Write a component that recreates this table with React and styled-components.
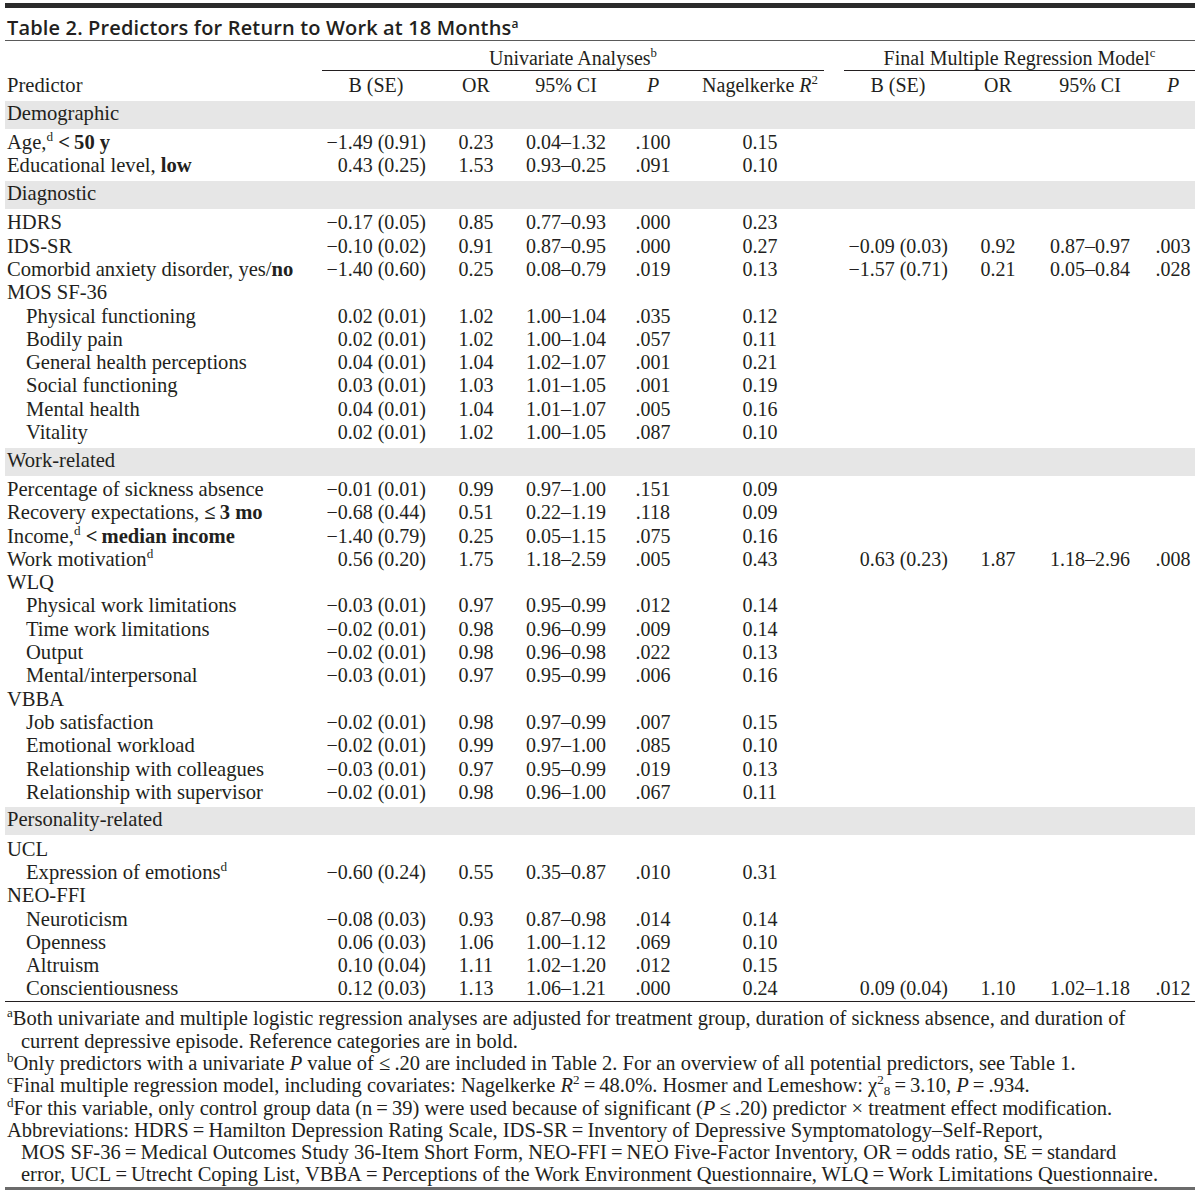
import React from 'react'
import styled, { createGlobalStyle } from 'styled-components'

const COLS = '317px 108px 92px 88px 86px 128px 20px 108px 92px 92px 59px'

const Global = createGlobalStyle`
  body {
    margin: 0;
    background: #fff;
    color: #231f20;
    font-family: "Liberation Serif", "Times New Roman", serif;
  }
`

const Page = styled.div`
  width: 1190px;
  padding: 0 5px;
  overflow: hidden;
`

const TopBar = styled.div`
  margin-top: 3px;
  height: 5px;
  background: #2b2b2b;
`

const Title = styled.h1`
  margin: 0;
  padding: 8px 0 0 2px;
  height: 24px;
  line-height: 24px;
  font-family: "Open Sans", "Liberation Sans", sans-serif;
  font-weight: 600;
  font-size: 20px;
  letter-spacing: 0.15px;
  color: #231f20;
  border-bottom: 1.5px solid #5a5a5a;
  white-space: nowrap;
`

const TitleSup = styled.sup`
  font-size: 12px;
  vertical-align: 7px;
  line-height: 0;
`

const Grid = styled.div`
  display: grid;
  grid-template-columns: ${COLS};
  font-size: 20px;
  line-height: 23.3px;
  white-space: nowrap;
`

const HeadTop = styled(Grid)`
  margin-top: 6px;
`

const HeadRow = styled(Grid)`
  margin-top: 3px;
`

const Group = styled.div`
  grid-column: ${({ $span }) => $span};
  text-align: center;
  border-bottom: 1px solid #231f20;
`

const Cell = styled.div`
  text-align: ${({ $align }) => $align || 'center'};
  padding-right: ${({ $pr }) => $pr || 0}px;
  padding-left: ${({ $pl }) => $pl || 0}px;
`

const Label = styled.div`
  padding-left: ${({ $indent }) => ($indent ? 21 : 2)}px;
  font-size: 20.6px;
`

const Section = styled.div`
  margin: 3.3px 0 2.3px;
  height: 28px;
  padding-left: 2px;
  line-height: 24px;
  font-size: 20.6px;
  background: #e6e6e6;
`

const Sup = styled.sup`
  font-size: 0.64em;
  vertical-align: 0.6em;
  line-height: 0;
`

const Sub = styled.sub`
  font-size: 0.64em;
  vertical-align: -0.2em;
  line-height: 0;
`

const I = styled.i`
  font-style: italic;
`

const B = styled.b`
  font-weight: 700;
`

const Rule = styled.div`
  margin-top: 0.6px;
  border-top: 1px solid #231f20;
`

const Notes = styled.div`
  padding-top: 5px;
  font-size: 20.5px;
  line-height: 22.3px;
`

const NoteLine = styled.div`
  white-space: nowrap;
  padding-left: ${({ $indent }) => ($indent ? 16 : 2)}px;
`

const BottomRule = styled.div`
  margin-top: 1.5px;
  border-top: 3px solid #6b6b6b;
`

const th = '\u2009'

const U_SPEC = [
  { $align: 'right', $pr: 4 },
  {},
  {},
  {},
  {},
]
const F_SPEC = [
  { $align: 'right', $pr: 4 },
  {},
  {},
  { $pl: 15 },
]

const rows = [
  { section: 'Demographic' },
  { label: <>Age,<Sup>d</Sup> <B>&lt;{th}50 y</B></>, u: ['−1.49 (0.91)', '0.23', '0.04–1.32', '.100', '0.15'] },
  { label: <>Educational level, <B>low</B></>, u: ['0.43 (0.25)', '1.53', '0.93–0.25', '.091', '0.10'] },
  { section: 'Diagnostic' },
  { label: 'HDRS', u: ['−0.17 (0.05)', '0.85', '0.77–0.93', '.000', '0.23'] },
  { label: 'IDS-SR', u: ['−0.10 (0.02)', '0.91', '0.87–0.95', '.000', '0.27'], f: ['−0.09 (0.03)', '0.92', '0.87–0.97', '.003'] },
  { label: <>Comorbid anxiety disorder, yes/<B>no</B></>, u: ['−1.40 (0.60)', '0.25', '0.08–0.79', '.019', '0.13'], f: ['−1.57 (0.71)', '0.21', '0.05–0.84', '.028'] },
  { label: 'MOS SF-36' },
  { label: 'Physical functioning', indent: true, u: ['0.02 (0.01)', '1.02', '1.00–1.04', '.035', '0.12'] },
  { label: 'Bodily pain', indent: true, u: ['0.02 (0.01)', '1.02', '1.00–1.04', '.057', '0.11'] },
  { label: 'General health perceptions', indent: true, u: ['0.04 (0.01)', '1.04', '1.02–1.07', '.001', '0.21'] },
  { label: 'Social functioning', indent: true, u: ['0.03 (0.01)', '1.03', '1.01–1.05', '.001', '0.19'] },
  { label: 'Mental health', indent: true, u: ['0.04 (0.01)', '1.04', '1.01–1.07', '.005', '0.16'] },
  { label: 'Vitality', indent: true, u: ['0.02 (0.01)', '1.02', '1.00–1.05', '.087', '0.10'] },
  { section: 'Work-related' },
  { label: 'Percentage of sickness absence', u: ['−0.01 (0.01)', '0.99', '0.97–1.00', '.151', '0.09'] },
  { label: <>Recovery expectations, <B>≤{th}3 mo</B></>, u: ['−0.68 (0.44)', '0.51', '0.22–1.19', '.118', '0.09'] },
  { label: <>Income,<Sup>d</Sup> <B>&lt;{th}median income</B></>, u: ['−1.40 (0.79)', '0.25', '0.05–1.15', '.075', '0.16'] },
  { label: <>Work motivation<Sup>d</Sup></>, u: ['0.56 (0.20)', '1.75', '1.18–2.59', '.005', '0.43'], f: ['0.63 (0.23)', '1.87', '1.18–2.96', '.008'] },
  { label: 'WLQ' },
  { label: 'Physical work limitations', indent: true, u: ['−0.03 (0.01)', '0.97', '0.95–0.99', '.012', '0.14'] },
  { label: 'Time work limitations', indent: true, u: ['−0.02 (0.01)', '0.98', '0.96–0.99', '.009', '0.14'] },
  { label: 'Output', indent: true, u: ['−0.02 (0.01)', '0.98', '0.96–0.98', '.022', '0.13'] },
  { label: 'Mental/interpersonal', indent: true, u: ['−0.03 (0.01)', '0.97', '0.95–0.99', '.006', '0.16'] },
  { label: 'VBBA' },
  { label: 'Job satisfaction', indent: true, u: ['−0.02 (0.01)', '0.98', '0.97–0.99', '.007', '0.15'] },
  { label: 'Emotional workload', indent: true, u: ['−0.02 (0.01)', '0.99', '0.97–1.00', '.085', '0.10'] },
  { label: 'Relationship with colleagues', indent: true, u: ['−0.03 (0.01)', '0.97', '0.95–0.99', '.019', '0.13'] },
  { label: 'Relationship with supervisor', indent: true, u: ['−0.02 (0.01)', '0.98', '0.96–1.00', '.067', '0.11'] },
  { section: 'Personality-related' },
  { label: 'UCL' },
  { label: <>Expression of emotions<Sup>d</Sup></>, indent: true, u: ['−0.60 (0.24)', '0.55', '0.35–0.87', '.010', '0.31'] },
  { label: 'NEO-FFI' },
  { label: 'Neuroticism', indent: true, u: ['−0.08 (0.03)', '0.93', '0.87–0.98', '.014', '0.14'] },
  { label: 'Openness', indent: true, u: ['0.06 (0.03)', '1.06', '1.00–1.12', '.069', '0.10'] },
  { label: 'Altruism', indent: true, u: ['0.10 (0.04)', '1.11', '1.02–1.20', '.012', '0.15'] },
  { label: 'Conscientiousness', indent: true, u: ['0.12 (0.03)', '1.13', '1.06–1.21', '.000', '0.24'], f: ['0.09 (0.04)', '1.10', '1.02–1.18', '.012'] },
]

const DataRow = ({ row }) => {
  const u = row.u || ['', '', '', '', '']
  const f = row.f || ['', '', '', '']
  return (
    <Grid>
      <Label $indent={row.indent}>{row.label}</Label>
      {u.map((v, i) => (
        <Cell key={'u' + i} {...U_SPEC[i]}>{v}</Cell>
      ))}
      <div />
      {f.map((v, i) => (
        <Cell key={'f' + i} {...F_SPEC[i]}>{v}</Cell>
      ))}
    </Grid>
  )
}

const App = () => {
  return (
    <Page>
      <Global />
      <TopBar />
      <Title>
        Table 2. Predictors for Return to Work at 18 Months<TitleSup>a</TitleSup>
      </Title>
      <HeadTop>
        <div />
        <Group $span="2 / 7">Univariate Analyses<Sup>b</Sup></Group>
        <div />
        <Group $span="8 / 12">Final Multiple Regression Model<Sup>c</Sup></Group>
      </HeadTop>
      <HeadRow>
        <Label>Predictor</Label>
        <Cell>B (SE)</Cell>
        <Cell>OR</Cell>
        <Cell>95% CI</Cell>
        <Cell><I>P</I></Cell>
        <Cell>Nagelkerke <I>R</I><Sup>2</Sup></Cell>
        <div />
        <Cell>B (SE)</Cell>
        <Cell>OR</Cell>
        <Cell>95% CI</Cell>
        <Cell $pl={15}><I>P</I></Cell>
      </HeadRow>
      {rows.map((row, i) =>
        row.section ? (
          <Section key={i}>{row.section}</Section>
        ) : (
          <DataRow key={i} row={row} />
        )
      )}
      <Rule />
      <Notes>
        <NoteLine>
          <Sup>a</Sup>Both univariate and multiple logistic regression analyses are adjusted for treatment group, duration of sickness absence, and duration of
        </NoteLine>
        <NoteLine $indent>current depressive episode. Reference categories are in bold.</NoteLine>
        <NoteLine>
          <Sup>b</Sup>Only predictors with a univariate <I>P</I> value of ≤{th}.20 are included in Table 2. For an overview of all potential predictors, see Table 1.
        </NoteLine>
        <NoteLine>
          <Sup>c</Sup>Final multiple regression model, including covariates: Nagelkerke <I>R</I><Sup>2</Sup>{th}={th}48.0%. Hosmer and Lemeshow: χ<Sup>2</Sup><Sub>8</Sub>{th}={th}3.10, <I>P</I>{th}={th}.934.
        </NoteLine>
        <NoteLine>
          <Sup>d</Sup>For this variable, only control group data (n{th}={th}39) were used because of significant (<I>P</I>{th}≤{th}.20) predictor × treatment effect modification.
        </NoteLine>
        <NoteLine>
          Abbreviations: HDRS{th}={th}Hamilton Depression Rating Scale, IDS-SR{th}={th}Inventory of Depressive Symptomatology–Self-Report,
        </NoteLine>
        <NoteLine $indent>
          MOS SF-36{th}={th}Medical Outcomes Study 36-Item Short Form, NEO-FFI{th}={th}NEO Five-Factor Inventory, OR{th}={th}odds ratio, SE{th}={th}standard
        </NoteLine>
        <NoteLine $indent>
          error, UCL{th}={th}Utrecht Coping List, VBBA{th}={th}Perceptions of the Work Environment Questionnaire, WLQ{th}={th}Work Limitations Questionnaire.
        </NoteLine>
      </Notes>
      <BottomRule />
    </Page>
  )
}

export default App
